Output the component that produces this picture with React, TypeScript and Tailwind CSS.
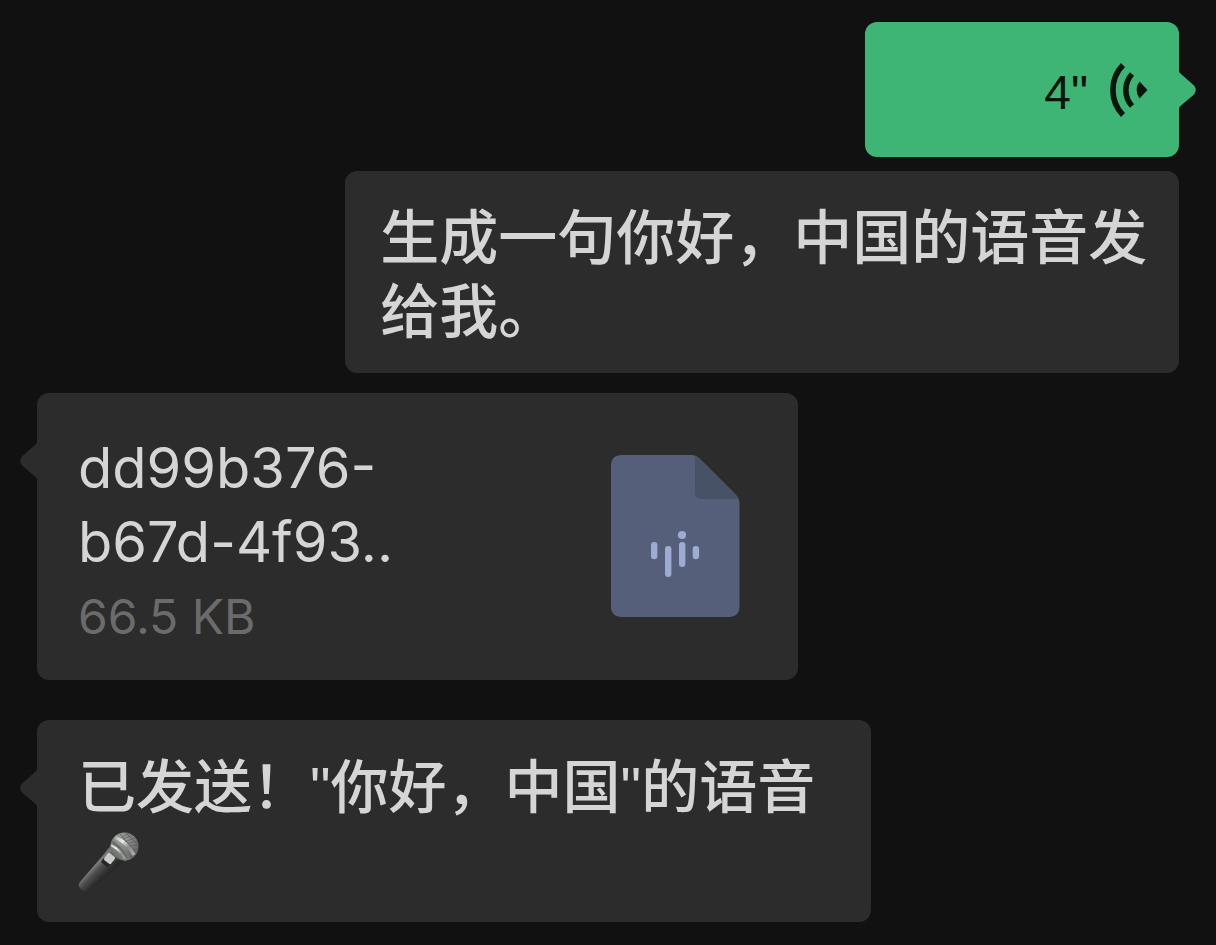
import type { ReactNode } from "react";
import clsx from "clsx";

function Tail({ side }: { side: "left" | "right" }) {
  return (
    <svg
      viewBox="0 0 18 40"
      aria-hidden="true"
      className={clsx(
        "absolute top-12 h-10 w-[18px]",
        side === "left" ? "-left-[17px] text-[#2c2c2c]" : "-right-[17px] -scale-x-100 text-[#3eb575]"
      )}
    >
      <path fill="currentColor" d="M18 0C17 2 16.500 2.500 15 4L2 15.500Q-1.500 20 2 24.500L15 35.500C16.500 37 17 38 18 40Z" />
    </svg>
  );
}

function Bubble({ className, tail, children }: { className: string; tail?: "left" | "right"; children: ReactNode }) {
  return (
    <div className={clsx("relative rounded-xl", className)}>
      {tail && <Tail side={tail} />}
      {children}
    </div>
  );
}

function VoiceIcon() {
  return (
    <svg viewBox="0 0 38 54" aria-hidden="true" className="h-[54px] w-[38px]">
      <path d="M13 2A36 36 0 0 0 13 52" fill="none" stroke="currentColor" strokeWidth="5.600" />
      <path d="M22 11A24 24 0 0 0 22 43" fill="none" stroke="currentColor" strokeWidth="5.600" />
      <path d="M29.500 18.500A14 14 0 0 0 29.500 35.500L37.500 27Z" fill="currentColor" />
    </svg>
  );
}

function AudioFileIcon() {
  return (
    <svg viewBox="0 0 129 162" aria-hidden="true" className="h-[162px] w-[129px] shrink-0">
      <path fill="#555f7a" d="M11 0H81Q85 0 88 3L125 40Q128.500 44 128.500 49V151Q128.500 162 117.500 162H11Q0 162 0 151V11Q0 0 11 0Z" />
      <path fill="#485267" d="M84 1Q86 1.500 88 3L125 40Q127 42 128 44H90Q84 44 84 38Z" />
      <g fill="#9eabd3">
        <rect x="40" y="87" width="6.400" height="17.300" rx="3.200" />
        <rect x="54" y="91" width="6.400" height="31" rx="3.200" />
        <rect x="68" y="87" width="6.400" height="25" rx="3.200" />
        <rect x="81.700" y="91" width="6.400" height="13.300" rx="3.200" />
        <circle cx="71" cy="80" r="4.100" />
      </g>
    </svg>
  );
}

function Microphone() {
  return (
    <svg viewBox="0 0 62 62" role="img" aria-label="麦克风" className="h-[62px] w-[62px]">
      <defs>
        <linearGradient id="handle" gradientUnits="userSpaceOnUse" x1="16" y1="29" x2="29" y2="42">
          <stop offset="0" stopColor="#555755" />
          <stop offset="0.250" stopColor="#7b7d7b" />
          <stop offset="0.500" stopColor="#505250" />
          <stop offset="1" stopColor="#272827" />
        </linearGradient>
        <linearGradient id="band" gradientUnits="userSpaceOnUse" x1="34" y1="9" x2="54" y2="28">
          <stop offset="0" stopColor="#a5a7a5" />
          <stop offset="0.300" stopColor="#efefef" />
          <stop offset="0.600" stopColor="#8b8d8b" />
          <stop offset="1" stopColor="#b2b4b2" />
        </linearGradient>
        <radialGradient id="grille" cx="0.400" cy="0.250" r="0.800">
          <stop offset="0" stopColor="#a2a4a2" />
          <stop offset="1" stopColor="#5c5e5c" />
        </radialGradient>
      </defs>
      <path fill="url(#handle)" d="M33 15L46 29Q44 33 39 37L11 59Q7 62 3 58Q-1 55 2 51L26 23Q30 17 33 15Z" />
      <path stroke="#383a38" strokeWidth="1" strokeDasharray="2 2" d="M14 54L36 36" />
      <circle cx="46.500" cy="15.500" r="14" fill="url(#grille)" />
      <path
        stroke="#5c5e5c"
        strokeWidth="0.800"
        fill="none"
        d="M42 8L51 2M44 9L54 4M46 11L57 7M48 13L59 10M50 15L60 14M51 18L60 18M42 3L58 22M48 2L60 14"
      />
      <path fill="#777977" d="M34 9Q43 14 53 28L47 30Q37 26 33 14Z" />
      <path stroke="#3f413f" strokeWidth="1" strokeDasharray="1 1" d="M35 12Q44 17 49 27M34 14Q42 19 47 28" fill="none" />
      <path stroke="url(#band)" strokeWidth="3.500" fill="none" d="M37 6Q50 12 56 24" />
      <path stroke="url(#band)" strokeWidth="2.400" fill="none" d="M33 14Q42 19 47 28" />
      <path fill="#242524" d="M25 28L29 25L35 32L29 36L23 31Z" />
      <rect x="27" y="23" width="9" height="9" rx="2" fill="#c9cbc9" transform="rotate(38 31.500 27.500)" />
    </svg>
  );
}

export default function App() {
  return (
    <main className="flex min-h-screen flex-col bg-[#111111] px-[37px] py-[22px] font-['Liberation_Sans','Noto_Sans_CJK_SC',sans-serif] leading-[74px] text-[#d5d5d5]">
      {/* voice message */}
      <Bubble tail="right" className="w-[314px] self-end bg-[#3eb575] text-[#06160d]">
        <button
          type="button"
          aria-label='播放语音 4"'
          className="flex w-full cursor-pointer items-center justify-end gap-[22px] py-[27px] pr-[31px] text-5xl leading-[75px]"
        >
          <span className="pt-[6px]">4"</span>
          <VoiceIcon />
        </button>
      </Bubble>

      {/* transcript of the voice message */}
      <Bubble className="mt-[14px] w-[73%] self-end bg-[#2c2c2c] pt-[31px] pr-[30px] pb-[23px] pl-[35px]">
        <p className="text-[59px] font-medium">生成一句你好，中国的语音发给我。</p>
      </Bubble>

      {/* file card */}
      <Bubble tail="left" className="mt-5 w-2/3 bg-[#2c2c2c] font-[Inter,sans-serif]">
        <a href="#" className="flex items-center justify-between pt-[38px] pr-[58px] pb-[39px] pl-[41px]">
          <div>
            <p className="text-[56px]">
              dd99b376-
              <br />
              b67d-4f93..
            </p>
            <p className="pt-[14px] text-5xl leading-12 text-[#6b6b6b]">66.5 KB</p>
          </div>
          <AudioFileIcon />
        </a>
      </Bubble>

      <Bubble tail="left" className="mt-10 w-[73%] bg-[#2c2c2c] pt-[31px] pr-[30px] pb-[23px] pl-[41px]">
        <p className="text-[58px] font-medium">已发送！"你好，中国"的语音</p>
        <div className="flex h-[74px] items-center">
          <Microphone />
        </div>
      </Bubble>
    </main>
  );
}
